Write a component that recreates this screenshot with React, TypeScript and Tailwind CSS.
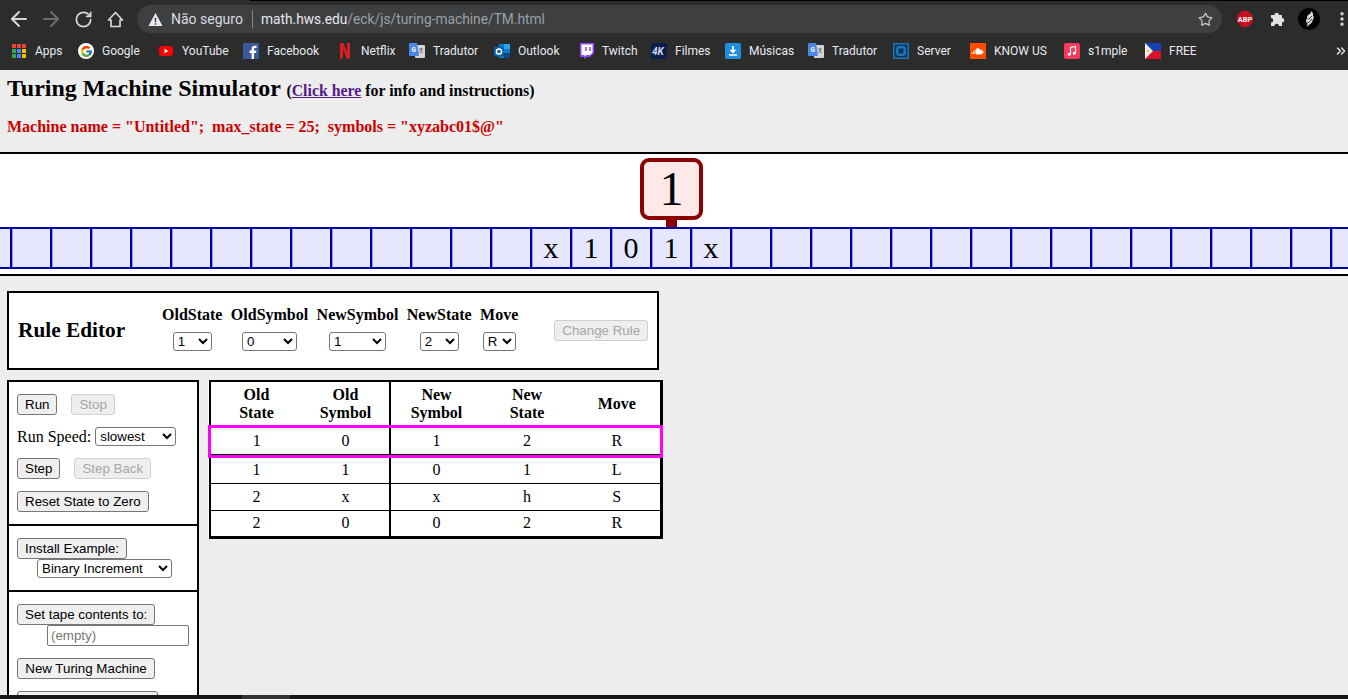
import { ArrowLeft, ArrowRight, RotateCw, Star, EllipsisVertical, ChevronsRight } from "lucide-react";
import { FcGoogle } from "react-icons/fc";
import type { ReactNode } from "react";

function TranslateIcon() {
  return (
    <svg viewBox="0 0 16 16" className="h-4 w-4">
      <rect x="6" y="2" width="10" height="13" rx="1" fill="#d5d5d5" />
      <path d="M10 6h4M12 5v1M13 6c-.5 2-2 3.5-3 4M11 7c.5 1.2 1.5 2.4 3 3" stroke="#777" fill="none" />
      <path d="M1 0h7l2 13H1a1 1 0 0 1-1-1V1a1 1 0 0 1 1-1z" fill="#4a86e8" />
      <text x="2.5" y="9" fontSize="6.5" fontWeight="700" fill="#fff" fontFamily="Roboto, sans-serif">G</text>
    </svg>
  );
}

const bookmarks: { label: string; className: string; icon: ReactNode }[] = [
  {
    label: "Apps",
    className: "w-[67px]",
    icon: (
      <svg viewBox="0 0 14 14" className="h-[14px] w-[14px]">
        <rect x="0" y="0" width="4" height="4" fill="#ea4335" />
        <rect x="5" y="0" width="4" height="4" fill="#ea4335" />
        <rect x="10" y="0" width="4" height="4" fill="#ea4335" />
        <rect x="0" y="5" width="4" height="4" fill="#34a853" />
        <rect x="5" y="5" width="4" height="4" fill="#4285f4" />
        <rect x="10" y="5" width="4" height="4" fill="#fbbc04" />
        <rect x="0" y="10" width="4" height="4" fill="#34a853" />
        <rect x="5" y="10" width="4" height="4" fill="#4285f4" />
        <rect x="10" y="10" width="4" height="4" fill="#fbbc04" />
      </svg>
    ),
  },
  {
    label: "Google",
    className: "w-[80px]",
    icon: (
      <span className="flex h-4 w-4 items-center justify-center rounded-full bg-white">
        <FcGoogle className="h-[13px] w-[13px]" />
      </span>
    ),
  },
  {
    label: "YouTube",
    className: "w-[85px]",
    icon: (
      <svg viewBox="0 0 16 16" className="h-4 w-4">
        <rect x="1" y="3" width="14" height="10" rx="3" fill="#f00" />
        <path d="M6.5 5.8v4.4L10.5 8z" fill="#fff" />
      </svg>
    ),
  },
  {
    label: "Facebook",
    className: "w-[94px]",
    icon: (
      <svg viewBox="0 0 16 16" className="h-4 w-4">
        <rect width="16" height="16" fill="#3b5998" />
        <path d="M11 16v-6h2l.4-2.4H11V6.2c0-.7.3-1.2 1.2-1.2h1.3V2.8c-.5 0-1.1-.1-1.8-.1-1.9 0-3.1 1.1-3.1 3.2v1.7H6.5V10h2.1v6z" fill="#fff" />
      </svg>
    ),
  },
  {
    label: "Netflix",
    className: "w-[72px]",
    icon: (
      <svg viewBox="0 0 16 16" className="h-4 w-4">
        <path d="M3 0h3.4L10 9V0h3v16c-1-.2-2.2-.3-3.3-.4L6 6.5v8.8L3 16z" fill="#d81f26" />
      </svg>
    ),
  },
  { label: "Tradutor", className: "w-[85px]", icon: <TranslateIcon /> },
  {
    label: "Outlook",
    className: "w-[84px]",
    icon: (
      <svg viewBox="0 0 16 16" className="h-4 w-4">
        <rect x="5" y="1" width="11" height="14" rx="1" fill="#0f78d4" />
        <rect x="10" y="1" width="6" height="5" fill="#28a8ea" />
        <rect x="10" y="10" width="6" height="5" fill="#14447d" />
        <rect x="0" y="3.5" width="10" height="10" rx="1" fill="#0a5ea8" />
        <circle cx="5" cy="8.5" r="2.6" fill="none" stroke="#fff" strokeWidth="1.5" />
      </svg>
    ),
  },
  {
    label: "Twitch",
    className: "w-[73px]",
    icon: (
      <svg viewBox="0 0 16 16" className="h-4 w-4">
        <path d="M2 0h14v10l-4 4H9l-3 2v-2H2z" fill="#9146ff" />
        <path d="M3.5 1.5h11v8L12 12H8.5l-2 1.5V12h-3z" fill="#fff" />
        <path d="M8 4v4M12 4v4" stroke="#9146ff" strokeWidth="1.5" />
      </svg>
    ),
  },
  {
    label: "Filmes",
    className: "w-[74px]",
    icon: (
      <svg viewBox="0 0 16 16" className="h-4 w-4">
        <rect width="16" height="16" rx="1" fill="#0b1f4f" />
        <text x="1" y="11.5" fontSize="10" fontWeight="700" fontStyle="italic" fill="#c9d4ee" fontFamily="Roboto, sans-serif">4K</text>
      </svg>
    ),
  },
  {
    label: "Músicas",
    className: "w-[83px]",
    icon: (
      <svg viewBox="0 0 16 16" className="h-4 w-4">
        <rect width="16" height="16" rx="2" fill="#1f8fdc" />
        <path d="M8 3v6M5.5 6.8 8 9.3l2.5-2.5M4 12h8" stroke="#fff" strokeWidth="1.6" fill="none" />
      </svg>
    ),
  },
  { label: "Tradutor", className: "w-[85px]", icon: <TranslateIcon /> },
  {
    label: "Server",
    className: "w-[77px]",
    icon: (
      <svg viewBox="0 0 16 16" className="h-4 w-4">
        <rect width="16" height="16" fill="#1d74b8" />
        <rect x="1.5" y="1.5" width="13" height="13" fill="#10365a" />
        <path d="M5 3h6l2 2v6l-2 2H5l-2-2V5z" fill="#1d74b8" />
        <rect x="5.5" y="5.5" width="5" height="5" fill="#10365a" />
      </svg>
    ),
  },
  {
    label: "KNOW US",
    className: "w-[94px]",
    icon: (
      <svg viewBox="0 0 16 16" className="h-4 w-4">
        <rect width="16" height="16" fill="#ff4a00" />
        <path d="M6 6.5c1-1.5 3.5-1.3 4 .8 2-.5 3 .8 3 1.9 0 1-.8 1.8-1.8 1.8H6zM2 9v2M3.5 7.8V11M5 7v4" stroke="#fff" fill="#fff" strokeWidth=".8" />
      </svg>
    ),
  },
  {
    label: "s1mple",
    className: "w-[81px]",
    icon: (
      <svg viewBox="0 0 16 16" className="h-4 w-4">
        <rect width="16" height="16" rx="2" fill="#fb3958" />
        <path d="M6.5 11V4.5l5-1V10" stroke="#fff" strokeWidth="1.2" fill="none" />
        <circle cx="5.2" cy="11.3" r="1.5" fill="#fff" />
        <circle cx="10.2" cy="10.3" r="1.5" fill="#fff" />
      </svg>
    ),
  },
  {
    label: "FREE",
    className: "w-[60px]",
    icon: (
      <svg viewBox="0 0 16 16" className="h-4 w-4">
        <rect width="16" height="8" y="0" fill="#1a3fb5" />
        <rect width="16" height="8" y="8" fill="#d8132a" />
        <path d="M0 0l8 8-8 8z" fill="#eee" />
        <circle cx="3" cy="8" r="1.3" fill="#f6c915" />
      </svg>
    ),
  },
];

function BrowserBar() {
  return (
    <div className="bg-[#2c2c2d] text-[#e8eaed] [font-family:Roboto,sans-serif]">
      <div className="relative flex h-[35px] items-center pl-[3px] pt-[3px]">
        <div className="absolute left-[250px] right-0 top-0 h-px bg-black" />
        <span className="flex w-[32px] shrink-0 justify-center">
          <ArrowLeft className="h-6 w-6 text-[#d5d7da]" strokeWidth={2} />
        </span>
        <span className="flex w-[32px] shrink-0 justify-center">
          <ArrowRight className="h-6 w-6 text-[#6b6d70]" strokeWidth={2} />
        </span>
        <span className="flex w-[32px] shrink-0 justify-center">
          <RotateCw className="h-[19px] w-[19px] text-[#d5d7da]" strokeWidth={2.2} />
        </span>
        <span className="flex w-[32px] shrink-0 justify-center">
          <svg viewBox="0 0 17 17" className="h-[17px] w-[17px] text-[#d5d7da]">
            <path d="M8.5 1.5 1.5 9H4v6.5h9V9h2.5z" fill="none" stroke="currentColor" strokeWidth="1.7" strokeLinejoin="round" />
          </svg>
        </span>
        <div className="ml-[6px] flex h-[28px] w-[1085px] shrink-0 items-center rounded-full bg-[#3e3f41] pl-[11px] pr-[9px] text-[14px]">
          <svg viewBox="0 0 16 16" className="h-[15px] w-[15px] fill-[#e8eaed]">
            <path d="M8 1 .5 15h15zM7.2 6h1.6v5H7.2zm0 6h1.6v1.5H7.2z" fillRule="evenodd" />
          </svg>
          <span className="ml-[8px] text-[#dadce0]">Não seguro</span>
          <span className="ml-[9px] h-[18px] w-px bg-[#80868b]" />
          <span className="ml-[8px] text-[13.75px]">math.hws.edu</span>
          <span className="text-[13.75px] text-[#9aa0a6]">/eck/js/turing-machine/TM.html</span>
          <Star className="ml-auto h-[15px] w-[15px] text-[#c4c7c5]" strokeWidth={2} />
        </div>
        <svg viewBox="0 0 16 16" className="ml-[15px] h-4 w-4 shrink-0">
          <path d="M4.9 0h6.2L16 4.9v6.2L11.1 16H4.9L0 11.1V4.9z" fill="#c8101c" />
          <text x="8" y="10.7" textAnchor="middle" fontSize="7.4" fontWeight="700" fill="#fff" fontFamily="Roboto, sans-serif">ABP</text>
        </svg>
        <svg viewBox="0 0 15 16" className="ml-[17px] h-[16px] w-[15px] shrink-0 fill-[#dfe1e4]">
          <path d="M1 4h3.5a2.25 2.25 0 0 1 4.5 0H12v3a2.25 2.25 0 0 1 0 4.5V15H9a2.25 2.25 0 0 0-4.5 0H1v-3.5a2.25 2.25 0 0 0 0-4.5z" />
        </svg>
        <span className="ml-[13px] flex h-[22px] w-[22px] shrink-0 items-center justify-center rounded-full bg-black">
          <svg viewBox="0 0 16 20" className="h-[18px] w-[14px]">
            <path d="M10 1c2 1 3.5 3 2.5 5 1.5 1.5 1 4-.5 5.5.5 2-1.5 3.5-3 4.5-1 1-2.5 2-4 3 1-1.5 1.5-3 1-4.5C4 13.5 4 11 6 9.5 5 7 7 4.5 9.5 4 10 3 10 2 10 1z" fill="#d9d9d9" />
            <path d="M6.5 10.5c2-.5 3.5-2 4.5-4M6 14.5c2-.5 4-2 5-4.5" stroke="#111" strokeWidth=".9" fill="none" />
          </svg>
        </span>
        <EllipsisVertical className="ml-[13px] h-[18px] w-[18px] shrink-0 text-[#d5d7da]" strokeWidth={2.6} />
      </div>
      <div className="flex h-[35px] items-center pb-[3px] pl-[11px] text-[12px]">
        {bookmarks.map((b, i) => (
          <div key={i} className={`flex shrink-0 items-center ${b.className}`}>
            <span className="flex w-4 shrink-0 justify-center">{b.icon}</span>
            <span className="ml-[8px] whitespace-nowrap">{b.label}</span>
          </div>
        ))}
        <ChevronsRight className="ml-auto h-[14px] w-[14px]" strokeWidth={2.4} />
      </div>
    </div>
  );
}

const tapeSymbols: Record<number, string> = { 14: "x", 15: "1", 16: "0", 17: "1", 18: "x" };

function Tape() {
  const cells = Array.from({ length: 35 }, (_, i) => i);
  return (
    <div className="border-y-2 border-black bg-white pb-[5px]">
      <div className="relative h-[73px]">
        <div className="absolute left-[640px] top-[4px] flex h-[62px] w-[63px] items-center justify-center rounded-[9px] border-4 border-[#8b0000] bg-[#ffe8e8] text-[48px] leading-none">
          1
        </div>
        <div className="absolute left-[666px] top-[66px] h-[7px] w-[11px] bg-[#8b0000]" />
      </div>
      <div className="flex h-[42px] overflow-hidden border-y-2 border-[#0000aa] bg-[#e6e6ff]">
        <div className="flex shrink-0 -translate-x-[28px]">
          {cells.map((i) => (
            <div
              key={i}
              className="flex h-full w-[40px] shrink-0 items-center justify-center border-r-2 border-[#0000aa] text-[30px] leading-none shadow-[inset_1px_0_0_#9a9ae6]"
            >
              {tapeSymbols[i]}
            </div>
          ))}
        </div>
      </div>
    </div>
  );
}

const btn = "rounded-[3px] border border-[#767676] bg-[#efefef] px-[7px] h-[21px] text-[13.33px] leading-none text-black [font-family:'Liberation_Sans',Arial,sans-serif] whitespace-nowrap";
const btnOff = "rounded-[3px] border border-[#cfcfcf] bg-[#eeeeee] px-[7px] h-[21px] text-[13.33px] leading-none text-[#a6a6a6] [font-family:'Liberation_Sans',Arial,sans-serif] whitespace-nowrap";
const sel = "rounded-[3px] border border-[#767676] bg-white h-[19px] text-[13.33px] leading-none text-black [font-family:'Liberation_Sans',Arial,sans-serif]";

function RuleEditor() {
  const cols = [
    { label: "OldState", value: "1", className: "w-[39px]" },
    { label: "OldSymbol", value: "0", className: "w-[55px]" },
    { label: "NewSymbol", value: "1", className: "w-[57px]" },
    { label: "NewState", value: "2", className: "w-[39px]" },
    { label: "Move", value: "R", className: "w-[33px]" },
  ];
  return (
    <div className="ml-[7px] flex h-[79px] w-[652px] items-center border-2 border-black bg-white pl-[9px]">
      <h2 className="w-[144px] text-[21.33px] font-bold">Rule Editor</h2>
      <div className="mb-[4px] flex gap-[8.4px]">
        {cols.map((c) => (
          <div key={c.label} className="flex flex-col items-center gap-[8px]">
            <div className="text-[16px] font-bold leading-[18px]">{c.label}</div>
            <select className={`${c.className} ${sel}`} defaultValue={c.value}>
              <option>{c.value}</option>
            </select>
          </div>
        ))}
      </div>
      <button disabled className={`ml-[36px] w-[94px] ${btnOff}`}>
        Change Rule
      </button>
    </div>
  );
}

function ControlPanel() {
  return (
    <div className="w-[192px] shrink-0 self-start border-2 border-black bg-white text-[16px]">
      <div className="h-[144px] border-b-2 border-black pl-[8px] pt-[12px]">
        <div className="flex gap-[14px]">
          <button className={btn}>Run</button>
          <button disabled className={btnOff}>Stop</button>
        </div>
        <div className="mt-[12px] flex h-[19px] items-center">
          <span>Run Speed:</span>
          <select className={`ml-[4px] w-[81px] ${sel}`} defaultValue="slowest">
            <option>slowest</option>
          </select>
        </div>
        <div className="mt-[12px] flex gap-[14px]">
          <button className={btn}>Step</button>
          <button disabled className={btnOff}>Step Back</button>
        </div>
        <button className={`mt-[12px] ${btn}`}>Reset State to Zero</button>
      </div>
      <div className="h-[66px] border-b-2 border-black pl-[8px] pt-[12px]">
        <button className={`block ${btn}`}>Install Example:</button>
        <select className={`ml-[20px] block w-[135px] ${sel}`} defaultValue="Binary Increment">
          <option>Binary Increment</option>
        </select>
      </div>
      <div className="h-[120px] pl-[8px] pt-[12px]">
        <button className={`block ${btn}`}>Set tape contents to:</button>
        <input
          placeholder="(empty)"
          className="ml-[30px] block h-[21px] w-[142px] rounded-[2px] border border-[#767676] bg-white px-[3px] text-[13.33px] [font-family:'Liberation_Sans',Arial,sans-serif] placeholder:text-[#757575]"
        />
        <button className={`mt-[12px] block w-[138px] ${btn}`}>New Turing Machine</button>
        <button className={`mt-[12px] block w-[141px] ${btn}`} />
      </div>
    </div>
  );
}

const rules = [
  { cells: ["1", "0", "1", "2", "R"], className: "h-[30px] border-[3px] border-[#ff00ff]", cell: "shadow-[inset_0_-1px_0_#000]" },
  { cells: ["1", "1", "0", "1", "L"], className: "h-[24px]", cell: "pb-[1px]" },
  { cells: ["2", "x", "x", "h", "S"], className: "h-[27px] border-t border-black", cell: "" },
  { cells: ["2", "0", "0", "2", "R"], className: "h-[27px] border-t border-black", cell: "" },
];

function RuleTable() {
  return (
    <table className="-ml-px h-fit w-[455px] table-fixed self-start border-collapse border-y-2 border-l-2 border-r-[3px] border-b-[3px] border-black bg-white text-center text-[16px]">
      <thead>
        <tr className="h-[45px] font-bold leading-[18px]">
          <th className="w-[91px] p-0 pl-[2px] pt-[2px]">Old<br />State</th>
          <th className="w-[89px] p-0 pl-[2px] pt-[2px]">Old<br />Symbol</th>
          <th className="w-[91px] border-l-2 border-black p-0 pl-[2px] pt-[2px]">New<br />Symbol</th>
          <th className="w-[91px] p-0 pl-[2px] pt-[2px]">New<br />State</th>
          <th className="p-0 pl-[2px] pt-[2px]">Move</th>
        </tr>
      </thead>
      <tbody>
        {rules.map((r, i) => (
          <tr key={i} className={r.className}>
            {r.cells.map((v, j) => (
              <td key={j} className={`${j === 2 ? "border-l-2 border-black" : ""} p-0 pl-[2px] ${r.cell}`}>
                {v}
              </td>
            ))}
          </tr>
        ))}
      </tbody>
    </table>
  );
}

export default function App() {
  return (
    <div className="flex h-[699px] w-[1348px] flex-col overflow-hidden bg-[#ededed] text-black [font-family:'Liberation_Serif','Times_New_Roman',serif]">
      <BrowserBar />
      <div className="min-h-0 flex-1 overflow-hidden">
        <div className="h-[82px] pl-[7px] pt-[4px]">
          <h1 className="text-[24px] font-bold leading-[28px]">
            Turing Machine Simulator{" "}
            <span className="text-[15.85px]">
              (<span className="text-[#551a8b] underline">Click here</span> for info and instructions)
            </span>
          </h1>
          <p className="mt-[13px] text-[16px] font-bold leading-[18px] text-[#cc0000]">
            Machine name = "Untitled";&nbsp; max_state = 25;&nbsp; symbols = "xyzabc01$@"
          </p>
        </div>
        <Tape />
        <div className="mt-[15px]">
          <RuleEditor />
        </div>
        <div className="ml-[7px] mt-[10px] flex items-start gap-[10px]">
          <ControlPanel />
          <RuleTable />
        </div>
      </div>
      <div className="h-[4px] shrink-0 bg-[#171717] pl-[242px]">
        <div className="h-full w-[48px] bg-[#333333]" />
      </div>
    </div>
  );
}
